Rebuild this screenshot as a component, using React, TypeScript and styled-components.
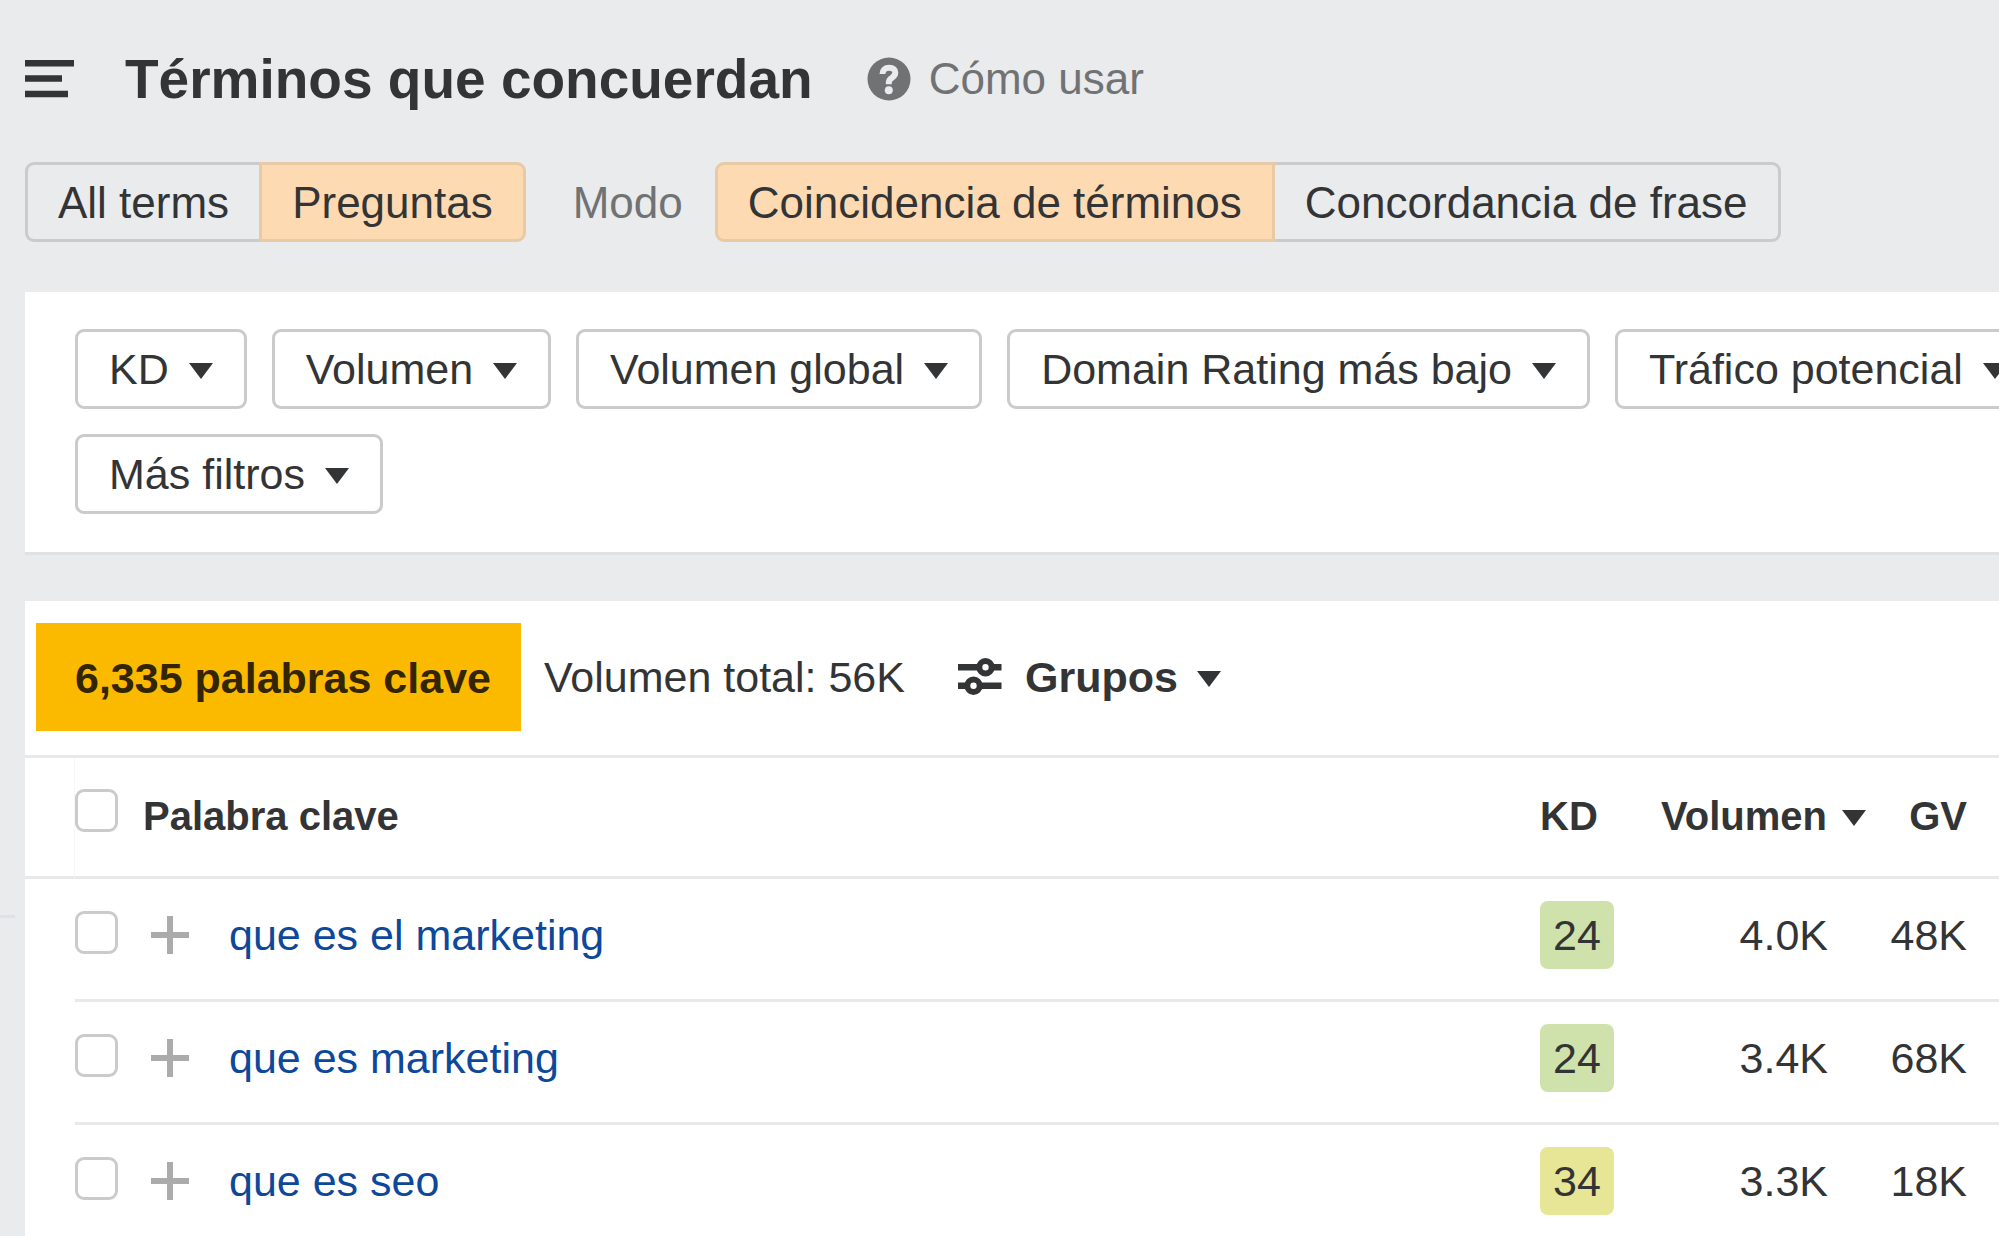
import React from "react";
import styled, { createGlobalStyle } from "styled-components";

const INK = "#333435";
const MUTED = "#707274";
const LINE = "#e8e9ea";
const CONTROL_LINE = "#cacbcc";

const GlobalStyle = createGlobalStyle`
  *, *::before, *::after { box-sizing: border-box; }
  body {
    margin: 0;
    background: #e9ebed;
    color: ${INK};
    font-family: "Liberation Sans", Arial, Helvetica, sans-serif;
    font-size: 43px;
    line-height: 50px;
  }
  button {
    font: inherit;
    color: inherit;
    cursor: pointer;
  }
`;

const Page = styled.div`
  display: grid;
  grid-template-columns: 25px minmax(0, 1fr);
  height: 100vh;
  overflow: hidden;
`;

const Rail = styled.aside`
  padding-top: 915px;
`;

const RailRule = styled.hr`
  width: 15px;
  height: 3px;
  margin: 0;
  border: 0;
  background: #dfe1e4;
`;

const Main = styled.main`
  min-width: 0;
`;

const Header = styled.header`
  display: flex;
  align-items: center;
  height: 162px;
  padding-bottom: 4px;
  white-space: nowrap;
`;

const PlainButton = styled.button`
  display: flex;
  align-items: center;
  padding: 0;
  border: 0;
  background: none;
`;

const Title = styled.h1`
  margin: 0 54px 0 50px;
  font-size: 55px;
  line-height: 64px;
  font-weight: 700;
`;

const HelpLink = styled.a`
  display: flex;
  align-items: center;
  gap: 18px;
  color: ${MUTED};
  font-size: 44px;
  text-decoration: none;
`;

const HeaderSection = styled.div`
  display: flex;
  flex-direction: column;
  height: 292px;
`;

const ModeBar = styled.div`
  display: flex;
  align-items: center;
  font-size: 44px;
  white-space: nowrap;
`;

const ModeLabel = styled.span`
  margin: 0 32px 0 47px;
  padding-top: 2px;
  color: ${MUTED};
`;

const Segments = styled.div`
  display: flex;
`;

const Segment = styled.button<{ $active?: boolean }>`
  height: 80px;
  padding: 2px 30px 0;
  border: 3px solid ${(p) => (p.$active ? "#e8caa6" : CONTROL_LINE)};
  background: ${(p) => (p.$active ? "#fedab3" : "transparent")};
  &:first-child {
    border-radius: 9px 0 0 9px;
    ${(p) => (p.$active ? "" : "border-right: 0;")}
  }
  &:last-child {
    border-radius: 0 9px 9px 0;
    ${(p) => (p.$active ? "" : "border-left: 0;")}
  }
`;

const Panel = styled.section`
  background: #fff;
  overflow: hidden;
`;

const FilterPanel = styled(Panel)`
  display: flex;
  flex-direction: column;
  gap: 25px;
  margin-bottom: 49px;
  padding: 37px 0 38px 50px;
  box-shadow: 0 3px 0 #dfe1e3;
`;

const FilterRow = styled.div`
  display: flex;
  gap: 25px;
`;

const FilterButton = styled.button`
  display: flex;
  flex: none;
  align-items: center;
  gap: 20px;
  height: 80px;
  padding: 0 31px;
  border: 3px solid #cbcbcb;
  border-radius: 9px;
  background: #fff;
  white-space: nowrap;
`;

const Toolbar = styled.div`
  display: flex;
  align-items: center;
  padding: 22px 0 24px 11px;
  border-bottom: 3px solid ${LINE};
  white-space: nowrap;
`;

const Highlight = styled.strong`
  padding: 30px 30px 28px 39px;
  background: #fbb900;
  color: #332500;
`;

const Total = styled.span`
  margin: 0 53px 0 23px;
`;

const GroupButton = styled(PlainButton)`
  gap: 19px;
  font-weight: 700;
`;

const Table = styled.table`
  width: 100%;
  border-collapse: separate;
  border-spacing: 0;
  table-layout: fixed;
`;

const Head = styled.th<{ $right?: boolean }>`
  height: 121px;
  padding: 0 0 3px;
  border-bottom: 3px solid ${LINE};
  font-size: 40px;
  text-align: ${(p) => (p.$right ? "right" : "left")};
  white-space: nowrap;
`;

const HeadGutter = styled.td`
  border-bottom: 3px solid ${LINE};
  border-right: 1px solid #f7f7f8;
`;

const HeadCheck = styled(Head)`
  padding-bottom: 14px;
`;

const HeadLast = styled(Head)`
  padding-right: 32px;
`;

const SortButton = styled(PlainButton)`
  display: inline-flex;
  gap: 15px;
  font-weight: 700;
`;

const Gutter = styled.td`
  padding: 0;
`;

const Cell = styled.td`
  height: 123px;
  padding: 0 0 8px;
  border-bottom: 3px solid ${LINE};
  white-space: nowrap;
`;

const CheckCell = styled(Cell)`
  padding-bottom: 14px;
`;

const AddCell = styled(Cell)`
  padding-left: 8px;
`;

const VolumeCell = styled(Cell)`
  padding-right: 38px;
  text-align: right;
`;

const GlobalCell = styled(Cell)`
  padding-right: 32px;
  text-align: right;
`;

const Checkbox = styled.input`
  appearance: none;
  display: block;
  width: 43px;
  height: 43px;
  margin: 0;
  border: 3px solid #cbcbcb;
  border-radius: 9px;
  background: #fff;
  &:checked {
    background: #fedab3;
  }
`;

const KeywordLink = styled.a`
  color: #0d489b;
  text-decoration: none;
`;

const Difficulty = styled.span<{ $tone: string }>`
  display: flex;
  align-items: center;
  justify-content: center;
  width: 74px;
  height: 68px;
  border-radius: 8px;
  background: ${(p) => p.$tone};
`;

const CaretSvg = styled.svg`
  flex: none;
  margin-top: 4px;
`;

const Caret = () => (
  <CaretSvg width="24" height="16" viewBox="0 0 24 16" fill="currentColor" aria-hidden="true">
    <path d="M0 0H24L12 16Z" />
  </CaretSvg>
);

const MenuIcon = () => (
  <svg width="50" height="38" viewBox="0 0 50 38" fill="currentColor" aria-hidden="true">
    <path d="M0 0H49V6.500H0ZM0 15.300H37V21.800H0ZM0 30.700H43V37.200H0Z" />
  </svg>
);

const HelpIcon = () => (
  <svg width="44" height="44" viewBox="0 0 44 44" aria-hidden="true">
    <circle cx="22" cy="22" r="21.500" fill={MUTED} />
    <path
      d="M15.500 17C15.500 13 18 10.700 22.200 10.700C26.200 10.700 28.300 12.800 28.300 15.500C28.300 18 27 19.300 25 20.700C22.700 22.200 21.800 23.300 21.800 25.500V27.300"
      fill="none"
      stroke="#e9ebed"
      strokeWidth="6"
    />
    <circle cx="21.800" cy="33.300" r="4" fill="#e9ebed" />
  </svg>
);

const SlidersIcon = () => (
  <svg width="48" height="38" viewBox="0 0 48 38" fill="none" stroke="currentColor" strokeWidth="6.500" aria-hidden="true">
    <path d="M0 9.300H22M33 9.300H43.500M0 27.700H10M21 27.700H43.500" />
    <circle cx="27.500" cy="9.300" r="6.200" strokeWidth="6" />
    <circle cx="15.500" cy="27.700" r="6.200" strokeWidth="6" />
  </svg>
);

const PlusIcon = () => (
  <svg width="38" height="38" viewBox="0 0 38 38" stroke="#ababab" strokeWidth="6" aria-hidden="true">
    <path d="M19 0V38M0 19H38" />
  </svg>
);

const FILTERS = [
  ["KD", "Volumen", "Volumen global", "Domain Rating más bajo", "Tráfico potencial"],
  ["Más filtros"],
];

const ROWS = [
  { keyword: "que es el marketing", kd: 24, tone: "#d0e2ab", volume: "4.0K", global: "48K" },
  { keyword: "que es marketing", kd: 24, tone: "#d0e2ab", volume: "3.4K", global: "68K" },
  { keyword: "que es seo", kd: 34, tone: "#e7e596", volume: "3.3K", global: "18K" },
];

export default function App() {
  return (
    <>
      <GlobalStyle />
      <Page>
        <Rail>
          <RailRule />
        </Rail>
        <Main>
          <HeaderSection>
            <Header>
              <PlainButton type="button" aria-label="Menú">
                <MenuIcon />
              </PlainButton>
              <Title>Términos que concuerdan</Title>
              <HelpLink href="#ayuda">
                <HelpIcon />
                Cómo usar
              </HelpLink>
            </Header>
            <ModeBar>
              <Segments>
                <Segment type="button">All terms</Segment>
                <Segment type="button" $active aria-pressed="true">
                  Preguntas
                </Segment>
              </Segments>
              <ModeLabel id="modo">Modo</ModeLabel>
              <Segments role="group" aria-labelledby="modo">
                <Segment type="button" $active aria-pressed="true">
                  Coincidencia de términos
                </Segment>
                <Segment type="button">Concordancia de frase</Segment>
              </Segments>
            </ModeBar>
          </HeaderSection>

          <FilterPanel>
            {FILTERS.map((row) => (
              <FilterRow key={row[0]}>
                {row.map((label) => (
                  <FilterButton key={label} type="button" aria-haspopup="true">
                    {label}
                    <Caret />
                  </FilterButton>
                ))}
              </FilterRow>
            ))}
          </FilterPanel>

          <Panel>
            <Toolbar>
              <Highlight>6,335 palabras clave</Highlight>
              <Total>Volumen total: 56K</Total>
              <GroupButton type="button" aria-haspopup="true">
                <SlidersIcon />
                Grupos
                <Caret />
              </GroupButton>
            </Toolbar>
            <Table>
              <colgroup>
                <col style={{ width: 50 }} />
                <col style={{ width: 68 }} />
                <col style={{ width: 86 }} />
                <col />
                <col style={{ width: 75 }} />
                <col style={{ width: 251 }} />
                <col style={{ width: 133 }} />
              </colgroup>
              <thead>
                <tr>
                  <HeadGutter />
                  <HeadCheck>
                    <Checkbox type="checkbox" aria-label="Seleccionar todo" />
                  </HeadCheck>
                  <Head colSpan={2}>Palabra clave</Head>
                  <Head>KD</Head>
                  <Head $right>
                    <SortButton type="button">
                      Volumen
                      <Caret />
                    </SortButton>
                  </Head>
                  <HeadLast $right>GV</HeadLast>
                </tr>
              </thead>
              <tbody>
                {ROWS.map((row) => (
                  <tr key={row.keyword}>
                    <Gutter />
                    <CheckCell>
                      <Checkbox type="checkbox" aria-label={row.keyword} />
                    </CheckCell>
                    <AddCell>
                      <PlainButton type="button" aria-label="Añadir">
                        <PlusIcon />
                      </PlainButton>
                    </AddCell>
                    <Cell>
                      <KeywordLink href="#palabra">{row.keyword}</KeywordLink>
                    </Cell>
                    <Cell>
                      <Difficulty $tone={row.tone}>{row.kd}</Difficulty>
                    </Cell>
                    <VolumeCell>{row.volume}</VolumeCell>
                    <GlobalCell>{row.global}</GlobalCell>
                  </tr>
                ))}
              </tbody>
            </Table>
          </Panel>
        </Main>
      </Page>
    </>
  );
}
